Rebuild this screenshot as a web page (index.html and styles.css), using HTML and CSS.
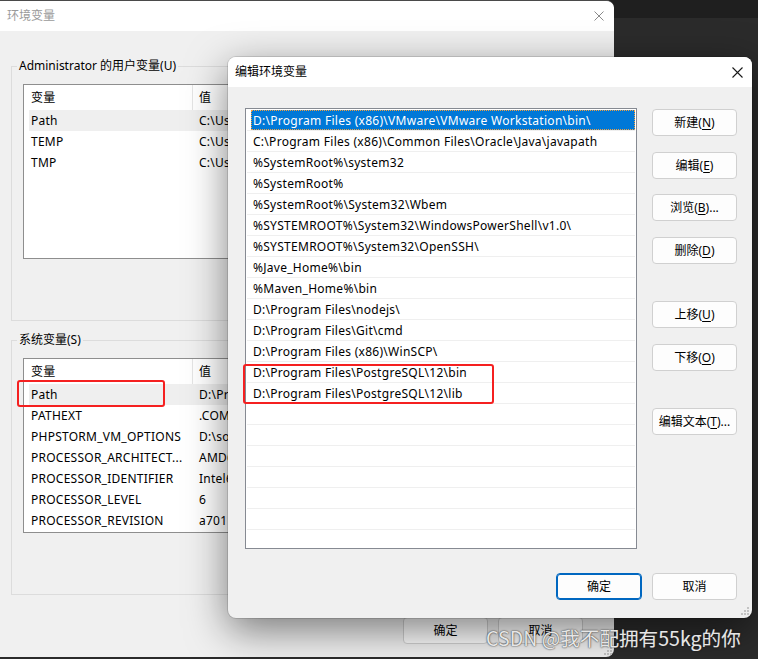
FILE: index.html
```html
<!DOCTYPE html>
<html lang="zh-CN">
<head>
<meta charset="utf-8">
<title>环境变量</title>
<link rel="stylesheet" href="styles.css">
</head>
<body>
<div class="desk">
  <div class="win back">
    <div class="titlebar">
      <span class="title dim">环境变量</span>
      <span class="close"><svg width="10" height="10" viewBox="0 0 10 10"><path d="M0.5 0.5L9.5 9.5M9.5 0.5L0.5 9.5" stroke="#8a8a8a" stroke-width="1"/></svg></span>
    </div>
    <div class="wbody">
      <div class="group g1">
        <div class="glabel">Administrator 的用户变量(U)</div>
        <div class="lv">
          <div class="lvhead"><span>变量</span><span class="sep">值</span></div>
          <div class="lvrow hl"><span>Path</span><span>C:\Us</span></div>
          <div class="lvrow"><span>TEMP</span><span>C:\Us</span></div>
          <div class="lvrow"><span>TMP</span><span>C:\Us</span></div>
        </div>
      </div>
      <div class="group g2">
        <div class="glabel">系统变量(S)</div>
        <div class="lv">
          <div class="lvhead"><span>变量</span><span class="sep">值</span></div>
          <div class="lvrow hl"><span>Path</span><span>D:\Pr</span></div>
          <div class="lvrow"><span>PATHEXT</span><span>.COM</span></div>
          <div class="lvrow"><span>PHPSTORM_VM_OPTIONS</span><span>D:\so</span></div>
          <div class="lvrow"><span>PROCESSOR_ARCHITECT...</span><span>AMD6</span></div>
          <div class="lvrow"><span>PROCESSOR_IDENTIFIER</span><span>Intel6</span></div>
          <div class="lvrow"><span>PROCESSOR_LEVEL</span><span>6</span></div>
          <div class="lvrow"><span>PROCESSOR_REVISION</span><span>a701</span></div>
        </div>
      </div>
      <div class="bfoot">
        <button class="btn bbtn">确定</button>
        <button class="btn bbtn">取消</button>
      </div>
    </div>
    <svg class="grip bgrip" width="10" height="10" viewBox="0 0 10 10"><g fill="#c4c4c4"><rect x="8" y="2" width="2" height="2"/><rect x="5" y="5" width="2" height="2"/><rect x="8" y="5" width="2" height="2"/><rect x="2" y="8" width="2" height="2"/><rect x="5" y="8" width="2" height="2"/><rect x="8" y="8" width="2" height="2"/></g></svg>
  </div>

  <div class="win front">
    <div class="titlebar ft">
      <span class="title">编辑环境变量</span>
      <span class="close"><svg width="11" height="11" viewBox="0 0 11 11"><path d="M0.5 0.5L10.5 10.5M10.5 0.5L0.5 10.5" stroke="#1a1a1a" stroke-width="1.1"/></svg></span>
    </div>
    <div class="fbody">
      <div class="main">
        <div class="lb">
          <div class="lbrow sel"><span class="t">D:\Program Files (x86)\VMware\VMware Workstation\bin\</span></div>
          <div class="lbrow"><span class="t">C:\Program Files (x86)\Common Files\Oracle\Java\javapath</span></div>
          <div class="lbrow"><span class="t">%SystemRoot%\system32</span></div>
          <div class="lbrow"><span class="t">%SystemRoot%</span></div>
          <div class="lbrow"><span class="t">%SystemRoot%\System32\Wbem</span></div>
          <div class="lbrow"><span class="t">%SYSTEMROOT%\System32\WindowsPowerShell\v1.0\</span></div>
          <div class="lbrow"><span class="t">%SYSTEMROOT%\System32\OpenSSH\</span></div>
          <div class="lbrow"><span class="t">%Jave_Home%\bin</span></div>
          <div class="lbrow"><span class="t">%Maven_Home%\bin</span></div>
          <div class="lbrow"><span class="t">D:\Program Files\nodejs\</span></div>
          <div class="lbrow"><span class="t">D:\Program Files\Git\cmd</span></div>
          <div class="lbrow"><span class="t">D:\Program Files (x86)\WinSCP\</span></div>
          <div class="lbrow"><span class="t">D:\Program Files\PostgreSQL\12\bin</span></div>
          <div class="lbrow"><span class="t">D:\Program Files\PostgreSQL\12\lib</span></div>
          <div class="lbrow"><span class="t"></span></div>
          <div class="lbrow"><span class="t"></span></div>
          <div class="lbrow"><span class="t"></span></div>
          <div class="lbrow"><span class="t"></span></div>
          <div class="lbrow"><span class="t"></span></div>
          <div class="lbrow"><span class="t"></span></div>
          <div class="lbrow"><span class="t"></span></div>
        </div>
        <div class="side">
          <div class="bgroup">
            <button class="btn">新建(<u>N</u>)</button>
            <button class="btn">编辑(<u>E</u>)</button>
            <button class="btn">浏览(<u>B</u>)...</button>
            <button class="btn">删除(<u>D</u>)</button>
          </div>
          <div class="bgroup">
            <button class="btn">上移(<u>U</u>)</button>
            <button class="btn">下移(<u>O</u>)</button>
          </div>
          <div class="bgroup">
            <button class="btn">编辑文本(<u>T</u>)...</button>
          </div>
        </div>
      </div>
      <div class="ffoot">
        <button class="btn def">确定</button>
        <button class="btn">取消</button>
      </div>
    </div>
    <svg class="grip fgrip" width="10" height="10" viewBox="0 0 10 10"><g fill="#c4c4c4"><rect x="8" y="2" width="2" height="2"/><rect x="5" y="5" width="2" height="2"/><rect x="8" y="5" width="2" height="2"/><rect x="2" y="8" width="2" height="2"/><rect x="5" y="8" width="2" height="2"/><rect x="8" y="8" width="2" height="2"/></g></svg>
  </div>

  <div class="mark mark-back"></div>
  <div class="mark mark-front"></div>
  <div class="watermark">CSDN @我不配拥有55kg的你</div>
</div>
</body>
</html>
```
FILE: styles.css
```css
* { box-sizing: border-box; margin: 0; padding: 0; }
html, body { width: 758px; height: 659px; overflow: hidden; }
body {
  font-family: "Noto Sans", "Noto Sans CJK SC", sans-serif;
  font-size: 12px;
  color: #000;
}
.desk {
  position: relative;
  width: 758px;
  height: 659px;
  background: linear-gradient(#1f1f1f 0 18px, #2b2b2b 18px);
}
.win {
  position: absolute;
  background: #f0f0f0;
  overflow: hidden;
}
.back {
  left: 0;
  top: 0;
  width: 614px;
  height: 657px;
  border-radius: 0 8px 8px 0;
  border-top: 1px solid #4a4a4a;
}
.front {
  left: 228px;
  top: 57px;
  width: 524px;
  height: 561px;
  border-radius: 8px;
  box-shadow: 0 0 0 1px rgba(0,0,0,0.12), 0 12px 40px rgba(0,0,0,0.5);
}
.titlebar {
  display: flex;
  align-items: center;
  justify-content: space-between;
  height: 30px;
  background: #fff;
  padding-left: 7px;
}
.title { font-size: 12px; line-height: 16px; }
.title.dim { color: #9a9a9a; }
.close {
  width: 30px;
  display: flex;
  justify-content: center;
  align-items: center;
}
.close svg { display: block; }

/* back window */
.wbody { padding: 35px 11px 0; }
.group {
  border: 1px solid #dcdcdc;
  padding: 0 11px 61px;
}
.g2 { margin-top: 19px; }
.glabel {
  width: max-content;
  background: #f0f0f0;
  line-height: 16px;
  height: 16px;
  margin: -9px 0 0 -6px;
  padding: 0 2px;
}
.lv {
  margin-top: 10px;
  height: 175px;
  background: #fff;
  border: 1px solid #8e8e8e;
  overflow: hidden;
  width: 580px;
  letter-spacing: 0.25px;
}
.lvhead {
  display: grid;
  grid-template-columns: 168px 1fr;
  height: 25px;
  line-height: 25px;
}
.lvhead span { padding-left: 7px; }
.lvhead .sep { border-left: 1px solid #e5e5e5; padding-left: 6px; }
.lvrow {
  display: grid;
  grid-template-columns: 163px 1fr;
  height: 21px;
  line-height: 21px;
  margin-left: 5px;
  white-space: nowrap;
  overflow: hidden;
}
.lvrow span { padding-left: 2px; overflow: hidden; }
.lvrow span + span { padding-left: 7px; }
.lvrow.hl { background: #efefef; }
.bfoot {
  display: flex;
  justify-content: flex-end;
  gap: 10px;
  margin-top: 22px;
  padding-right: 20px;
}
.bbtn { width: 86px; height: 24px; line-height: 22px; }

/* buttons */
.btn {
  font-family: "Noto Sans", "Noto Sans CJK SC", sans-serif;
  font-size: 12px;
  color: #000;
  background: #fdfdfd;
  border: 1px solid #d0d0d0;
  border-radius: 4px;
  width: 85px;
  height: 27px;
  line-height: 25px;
  text-align: center;
  white-space: nowrap;
}
.btn u { text-underline-offset: 2px; }
.btn.def {
  border-color: #0067c0;
  box-shadow: inset 0 0 0 1px #0067c0;
  width: 86px;
}

/* front dialog */
.fbody { padding: 21px 15px 0 17px; }
.main { display: flex; gap: 15px; }
.lb {
  width: 392px;
  height: 441px;
  background: #fff;
  border: 1px solid #868a92;
  padding: 1px;
  overflow: hidden;
  letter-spacing: 0.28px;
}
.lbrow {
  height: 21px;
  border-bottom: 1px solid #efefef;
  padding-left: 4px;
}
.lbrow .t {
  display: block;
  height: 20px;
  line-height: 21px;
  padding-left: 2px;
  white-space: nowrap;
}
.lbrow.sel .t {
  background: #0078d7;
  color: #fff;
  outline: 1px dotted #f0a040;
  outline-offset: -1px;
}
.side {
  display: flex;
  flex-direction: column;
  gap: 37px;
  margin-top: 1px;
}
.bgroup {
  display: flex;
  flex-direction: column;
  gap: 15.67px;
}
.ffoot {
  display: flex;
  justify-content: flex-end;
  gap: 10px;
  margin-top: 24px;
}

.grip { position: absolute; }
.bgrip { right: 2px; bottom: 2px; }
.fgrip { right: 3px; bottom: 3px; }

/* annotations */
.mark {
  position: absolute;
  border: 2.5px solid #f52020;
  border-radius: 3px;
}
.mark-back { left: 17px; top: 380px; width: 148px; height: 27px; }
.mark-front { left: 243px; top: 364px; width: 251px; height: 40px; }

.watermark {
  position: absolute;
  left: 486px;
  top: 625px;
  font-family: "Noto Sans CJK SC", sans-serif;
  font-size: 19.6px;
  line-height: 26px;
  color: #e6e6e6;
  white-space: nowrap;
  text-shadow: 0 0 1px #444, 0 0 2px rgba(0,0,0,0.6);
}
```
